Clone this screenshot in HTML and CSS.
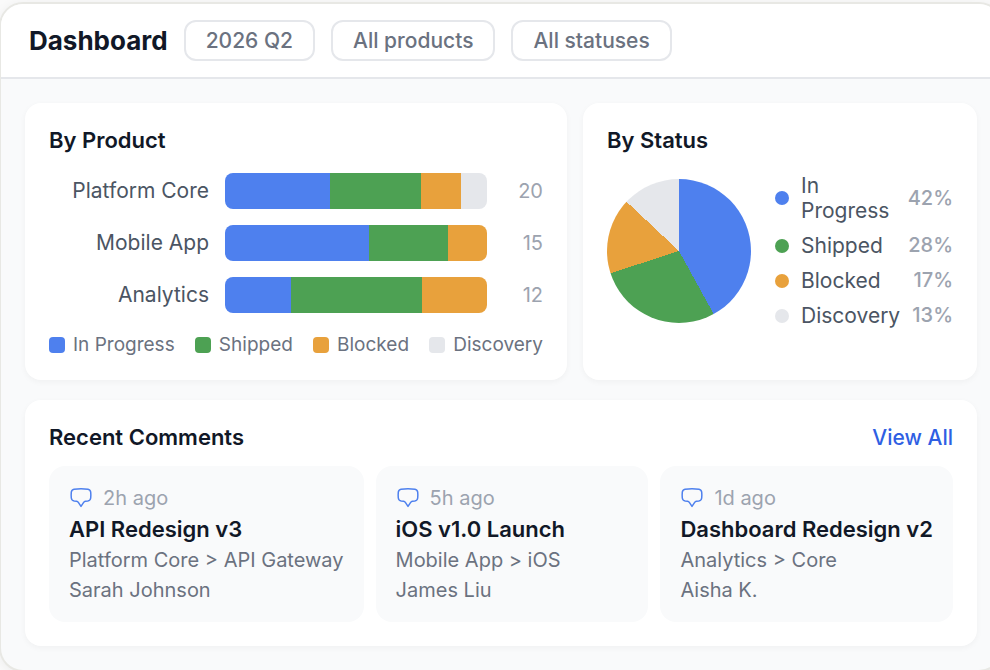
FILE: index.html
```html
<!DOCTYPE html>
<html lang="en">
<head>
<meta charset="utf-8">
<meta name="viewport" content="width=device-width, initial-scale=1">
<title>Dashboard</title>
<link rel="stylesheet" href="styles.css">
</head>
<body>
<svg width="0" height="0" class="symbols" aria-hidden="true">
  <symbol id="bubble" viewBox="0 0 24 24"><path d="M5 3.2Q12 2.3 19 3.200Q21.400 3.600 21.700 6.200Q22 9 21.700 12Q21.300 14.700 18.800 15L16.500 15.200Q15.300 15.400 14.500 16.600L12 20.400L9.500 16.600Q8.700 15.400 7.500 15.200L5.200 15Q2.700 14.700 2.300 12Q2 9 2.300 6.200Q2.600 3.600 5 3.200Z"/></symbol>
</svg>
<div class="window">
  <header class="topbar">
    <h1 class="page-title">Dashboard</h1>
    <button class="filter" type="button">2026 Q2</button>
    <button class="filter" type="button">All products</button>
    <button class="filter" type="button">All statuses</button>
  </header>
  <main class="content">
    <div class="charts">
      <section class="card">
        <h2 class="card-title">By Product</h2>
        <div class="bars">
          <div class="bar-row">
            <span class="bar-label">Platform Core</span>
            <div class="bar"><span class="progress" style="width:40%"></span><span class="shipped" style="width:35%"></span><span class="blocked" style="width:15%"></span><span class="discovery" style="width:10%"></span></div>
            <span class="bar-count">20</span>
          </div>
          <div class="bar-row">
            <span class="bar-label">Mobile App</span>
            <div class="bar"><span class="progress" style="width:55%"></span><span class="shipped" style="width:30%"></span><span class="blocked" style="width:15%"></span></div>
            <span class="bar-count">15</span>
          </div>
          <div class="bar-row">
            <span class="bar-label">Analytics</span>
            <div class="bar"><span class="progress" style="width:25%"></span><span class="shipped" style="width:50%"></span><span class="blocked" style="width:25%"></span></div>
            <span class="bar-count">12</span>
          </div>
        </div>
        <ul class="legend">
          <li><span class="swatch progress"></span>In Progress</li>
          <li><span class="swatch shipped"></span>Shipped</li>
          <li><span class="swatch blocked"></span>Blocked</li>
          <li><span class="swatch discovery"></span>Discovery</li>
        </ul>
      </section>
      <section class="card">
        <h2 class="card-title">By Status</h2>
        <div class="status">
          <div class="pie"></div>
          <ul class="status-list">
            <li><span class="dot progress"></span><span class="status-name">In Progress</span><span class="percent">42%</span></li>
            <li><span class="dot shipped"></span><span class="status-name">Shipped</span><span class="percent">28%</span></li>
            <li><span class="dot blocked"></span><span class="status-name">Blocked</span><span class="percent">17%</span></li>
            <li><span class="dot discovery"></span><span class="status-name">Discovery</span><span class="percent">13%</span></li>
          </ul>
        </div>
      </section>
    </div>
    <section class="card">
      <div class="card-head">
        <h2 class="card-title">Recent Comments</h2>
        <a class="view-all" href="#">View All</a>
      </div>
      <div class="comments">
        <article class="comment">
          <div class="meta"><svg class="bubble" aria-hidden="true"><use href="#bubble"/></svg>2h ago</div>
          <h3 class="comment-title">API Redesign v3</h3>
          <p>Platform Core &gt; API Gateway</p>
          <p>Sarah Johnson</p>
        </article>
        <article class="comment">
          <div class="meta"><svg class="bubble" aria-hidden="true"><use href="#bubble"/></svg>5h ago</div>
          <h3 class="comment-title">iOS v1.0 Launch</h3>
          <p>Mobile App &gt; iOS</p>
          <p>James Liu</p>
        </article>
        <article class="comment">
          <div class="meta"><svg class="bubble" aria-hidden="true"><use href="#bubble"/></svg>1d ago</div>
          <h3 class="comment-title">Dashboard Redesign v2</h3>
          <p>Analytics &gt; Core</p>
          <p>Aisha K.</p>
        </article>
      </div>
    </section>
  </main>
</div>
</body>
</html>
```
FILE: styles.css
```css
* {
  box-sizing: border-box;
}

:root {
  --progress: #4e80ee;
  --shipped: #4da153;
  --blocked: #e8a13c;
  --discovery: #e5e7eb;
  --line: #e5e7eb;
}

body {
  margin: 0;
  overflow: hidden;
  background: #fafafa;
  color: #111827;
  font-family: Inter, "Liberation Sans", sans-serif;
  font-size: 20px;
  line-height: 24px;
  font-optical-sizing: none;
}

h1, h2, h3, p, ul {
  margin: 0;
  padding: 0;
}

ul {
  list-style: none;
}

.symbols {
  position: absolute;
}

.window {
  margin: 2px -13px 0 -1px;
  border: 2px solid #e8e8e4;
  border-radius: 24px;
  overflow: hidden;
  background: #f9fafb;
  box-shadow: 0 2px 12px rgba(0, 0, 0, 0.06);
}

.topbar {
  display: flex;
  align-items: center;
  gap: 16px;
  padding: 16px 28px;
  background: #fff;
  border-bottom: 2px solid var(--line);
}

.page-title {
  font-size: 26px;
  line-height: 32px;
  font-weight: 700;
  font-optical-sizing: auto;
}

.filter {
  padding: 6px 20px;
  border: 2px solid var(--line);
  border-radius: 12px;
  background: #fff;
  color: #6b7280;
  font: inherit;
  font-size: 21px;
  font-weight: 500;
  line-height: 25px;
}

.content {
  display: grid;
  gap: 20px;
  padding: 24px;
}

.charts {
  display: grid;
  grid-template-columns: 271fr 197fr;
  gap: 16px;
}

.card {
  min-width: 0;
  padding: 24px;
  border-radius: 16px;
  background: #fff;
  box-shadow: 0 2px 6px rgba(0, 0, 0, 0.04);
}

.card-title {
  font-size: 22px;
  line-height: 26px;
  font-weight: 600;
}

.bars {
  display: grid;
  gap: 16px;
  margin-top: 20px;
}

.bar-row {
  display: grid;
  grid-template-columns: 160px 1fr 40px;
  align-items: center;
  gap: 16px;
}

.bar-label {
  color: #4b5563;
  font-size: 21px;
  text-align: right;
}

.bar {
  display: flex;
  height: 36px;
  border-radius: 8px;
  overflow: hidden;
}

.bar-count {
  color: #9ca3af;
  text-align: right;
}

.progress {
  background: var(--progress);
}

.shipped {
  background: var(--shipped);
}

.blocked {
  background: var(--blocked);
}

.discovery {
  background: var(--discovery);
}

.legend {
  display: flex;
  justify-content: space-between;
  margin-top: 20px;
  color: #6b7280;
  font-size: 19px;
  line-height: 23px;
}

.legend li {
  display: flex;
  align-items: center;
  gap: 8px;
  white-space: nowrap;
}

.swatch {
  width: 16px;
  height: 16px;
  border-radius: 4px;
}

.status {
  display: flex;
  align-items: center;
  gap: 24px;
  margin-top: 20px;
}

.pie {
  flex: none;
  width: 144px;
  height: 144px;
  border-radius: 50%;
  background: conic-gradient(var(--progress) 0 42%, var(--shipped) 42% 70%, var(--blocked) 70% 87%, var(--discovery) 87%);
}

.status-list {
  display: grid;
  flex: 1;
  gap: 10px;
  color: #4b5563;
  font-size: 21px;
  line-height: 25px;
}

.status-list li {
  display: flex;
  align-items: center;
  gap: 12px;
}

.dot {
  flex: none;
  width: 14px;
  height: 14px;
  border-radius: 50%;
}

.status-name {
  flex: 1;
}

.percent {
  color: #9ca3af;
  font-size: 20px;
  font-weight: 500;
}

.card-head {
  display: flex;
  align-items: center;
  justify-content: space-between;
}

.view-all {
  color: #2f5fe3;
  font-size: 21px;
  font-weight: 500;
  line-height: 25px;
  text-decoration: none;
}

.comments {
  display: grid;
  grid-template-columns: repeat(3, 1fr);
  gap: 12px;
  margin-top: 16px;
}

.comment {
  display: grid;
  gap: 6px;
  padding: 20px;
  border-radius: 16px;
  background: #f9fafb;
  color: #6b7280;
  white-space: nowrap;
}

.meta {
  display: flex;
  align-items: center;
  gap: 10px;
  color: #9ca3af;
}

.bubble {
  width: 24px;
  height: 24px;
  fill: none;
  stroke: var(--progress);
  stroke-width: 1.5;
  stroke-linejoin: round;
}

.comment-title {
  color: #111827;
  font-size: 22px;
  line-height: 26px;
  font-weight: 600;
}
```
